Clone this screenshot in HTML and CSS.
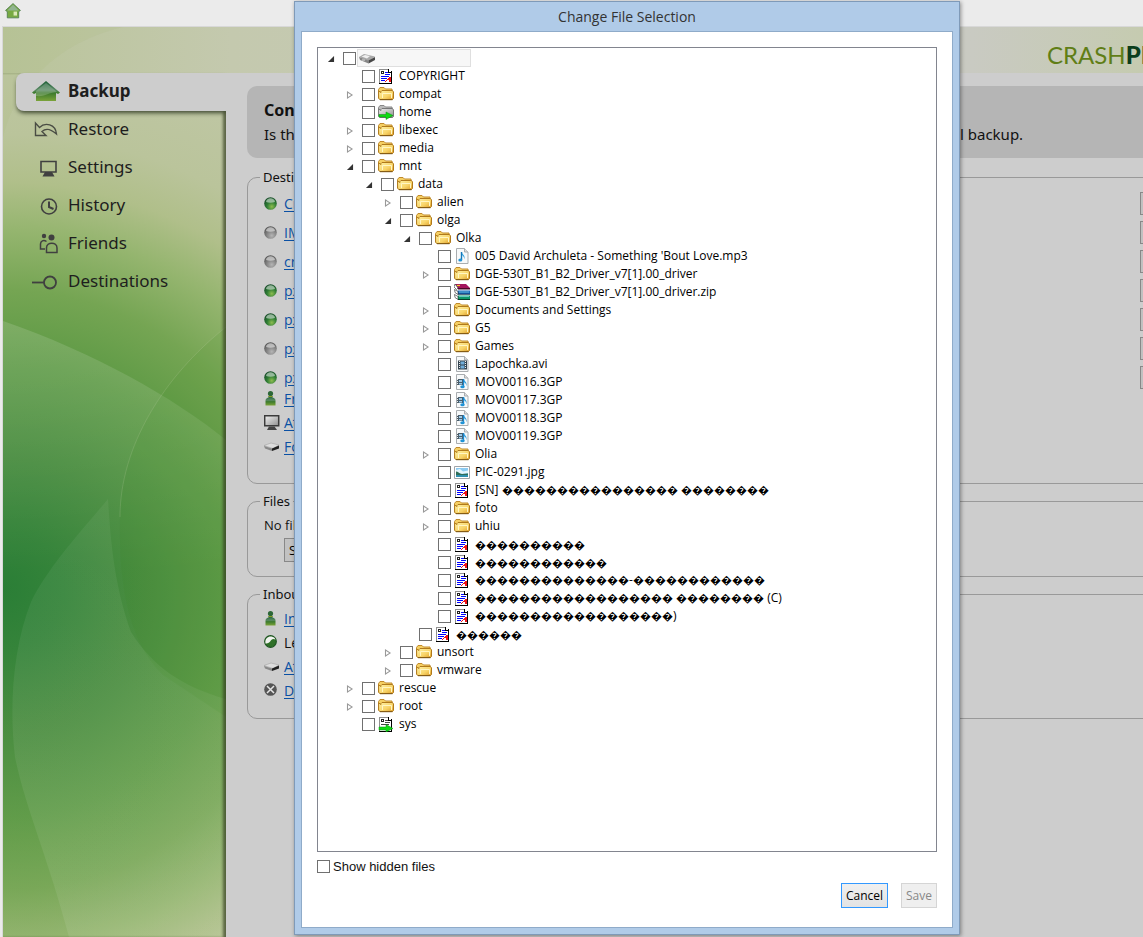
FILE: index.html
```html
<!DOCTYPE html>
<html lang="en">
<head>
<meta charset="utf-8">
<title>Change File Selection</title>
<link rel="stylesheet" href="styles.css">
</head>
<body>
<svg class="defs" aria-hidden="true">
  <defs>
    <linearGradient id="gold" x1="0" y1="0" x2="1" y2="1"><stop offset="0" stop-color="#fff3a8"/><stop offset=".6" stop-color="#f8d468"/><stop offset="1" stop-color="#dd9d2a"/></linearGradient>
    <linearGradient id="leaf" x1="0" y1="0" x2="0" y2="1"><stop offset="0" stop-color="#1d5f36"/><stop offset=".45" stop-color="#5a8a63"/><stop offset=".6" stop-color="#3c7a2c"/><stop offset="1" stop-color="#7ba33a"/></linearGradient>
    <radialGradient id="gball" cx=".6" cy=".75" r=".75"><stop offset="0" stop-color="#8dbd50"/><stop offset=".5" stop-color="#2f7d35"/><stop offset="1" stop-color="#164b28"/></radialGradient>
    <radialGradient id="sball" cx=".6" cy=".75" r=".75"><stop offset="0" stop-color="#b5b5b5"/><stop offset=".5" stop-color="#868686"/><stop offset="1" stop-color="#555"/></radialGradient>
    <linearGradient id="steel" x1="0" y1="0" x2="1" y2="1"><stop offset="0" stop-color="#f2f2f2"/><stop offset="1" stop-color="#909090"/></linearGradient>
  </defs>
  <symbol id="folder" viewBox="0 0 16 16">
    <path d="M.5 12V3.500L2 1.500h4L7.500 3h6.500v2" fill="#f5cf63" stroke="#c08a2c"/>
    <path d="M2 13.500h12.500l1-1V6L14.500 4.500H4l-1 1v1L.6 5v7.500z" fill="url(#gold)" stroke="#b07a1c"/>
    <path d="M4.500 12V7.500h9V12" fill="none" stroke="#fff6c4"/>
    <path d="M2 13.700h12.500" stroke="#7d5613"/>
  </symbol>
  <symbol id="doc" viewBox="0 0 16 16">
    <g shape-rendering="crispEdges">
      <path d="M1 1h10l3 3v11H1z" fill="#fff"/>
      <path d="M1.500 15V1.500H10" fill="none" stroke="#909090"/>
      <path d="M10.500 1v3.500H14M13.500 3v12.500H1" fill="none" stroke="#000"/>
      <path d="M3 3h3v3H3z" fill="#222"/><path d="M4 4h1v1H4z" fill="#fff"/>
      <path d="M7 4h3v1H7zM7 6h5v1H7zM3 8h8v1H3zM3 10h6v1H3zM3 12h4v1H3z" fill="#0000ff"/>
      <path d="M12 9h-1v1h-1v1H9v1H8v1H7v1h1v-1h1v-1h2v2h2V9z" fill="#f01018"/>
    </g>
  </symbol>
  <symbol id="linkdoc" viewBox="0 0 16 16">
    <g shape-rendering="crispEdges">
      <path d="M1 1h10l3 3v11H1z" fill="#fff"/>
      <path d="M1.500 15V1.500H10" fill="none" stroke="#909090"/>
      <path d="M10.500 1v3.500H14M13.500 3v12.500H1" fill="none" stroke="#000"/>
      <path d="M3 3h3v3H3z" fill="#222"/><path d="M4 4h1v1H4z" fill="#fff"/>
      <path d="M7 4h3v1H7zM7 6h5v1H7zM3 8h8v1H3z" fill="#444"/>
    </g>
    <path d="M1 11h7V8.500l7 4-7 3.500v-2H1z" fill="#0edb12" stroke="#0a8a10" stroke-width=".5"/>
  </symbol>
  <symbol id="linkfolder" viewBox="0 0 16 16">
    <path d="M.5 12V3.500L2 1.500h4L7.500 3h6.500v2" fill="#bbb" stroke="#888"/>
    <path d="M2 13.500h12.500l1-1V6L14.500 4.500H4l-1 1v1L.6 5v7.500z" fill="url(#steel)" stroke="#777"/>
    <path d="M1 10.500h7V8l7 3.500-7 4v-2.500H1z" fill="#0edb12" stroke="#0a8a10" stroke-width=".5"/>
  </symbol>
  <symbol id="music" viewBox="0 0 16 16">
    <path d="M2.500.5h8l3.500 3.500v11.500H2.500z" fill="#f7f9fa" stroke="#a9adb0"/>
    <path d="M10.500.5V4H14" fill="#ddd" stroke="#a9adb0"/>
    <path d="M7.500 4v8" stroke="#1477b8" stroke-width="1.400"/><path d="M8 4c0 3 4 3 2 7.500C10.500 8 8.500 8 8 7z" fill="#2b9fdf"/><ellipse cx="6.300" cy="12" rx="2" ry="1.500" fill="#1f93d6"/>
  </symbol>
  <symbol id="video" viewBox="0 0 16 16">
    <path d="M2.500.5h8l3.500 3.500v11.500H2.500z" fill="#f7f9fa" stroke="#a9adb0"/><path d="M10.500.5V4H14" fill="#ddd" stroke="#a9adb0"/>
    <path d="M4 4.500h9v9H4z" fill="#344450"/><path d="M6.500 5.500h4v3h-4zM6.500 9.500h4v3h-4z" fill="#71aeda"/><path d="M5.500 5v8M11.500 5v8" stroke="#eee" stroke-dasharray="1 1"/>
  </symbol>
  <symbol id="clip" viewBox="0 0 16 16">
    <path d="M2.500.5h8l3.500 3.500v11.500H2.500z" fill="#f7f9fa" stroke="#a9adb0"/><path d="M10.500.5V4H14" fill="#ddd" stroke="#a9adb0"/>
    <path d="M3 5h6v6H3z" fill="#4a5d6a"/><path d="M5 6h3v2H5zM5 9h3v1.500H5z" fill="#9cc9e8"/><path d="M3.500 5v6" stroke="#eee" stroke-dasharray="1 1"/>
    <path d="M9.500 5v8" stroke="#1c86cc" stroke-width="1.300"/><path d="M10 4.500c0 3 4 3.500 2 8C12.500 9 10.500 9 10 8z" fill="#2b9fdf"/><ellipse cx="8.500" cy="12.800" rx="2.200" ry="1.500" fill="#1f93d6"/>
  </symbol>
  <symbol id="photo" viewBox="0 0 16 16">
    <path d="M.5 2.500h15v12H.5z" fill="#fff" stroke="#a0a4a8"/><path d="M2 4h12v9H2z" fill="#8ccbf2"/><path d="M2 6l4-1 3 2.500 5-1V9l-6 1-6-1z" fill="#e4f5fc"/><path d="M2 7.500c2 0 3 2 6 2.500l6-.5v1.500H2z" fill="#2f6e58"/><path d="M2 11h12v2H2z" fill="#2f8fae"/>
  </symbol>
  <symbol id="rar" viewBox="0 0 16 16">
    <path d="M1 0h11l4 4H4z" fill="#a3145c"/><path d="M3.500 4H16v1.500H4z" fill="#4c0828"/><path d="M1 0l3 4-1.500 1.500L0 3z" fill="#fff" stroke="#222" stroke-width=".6"/><path d="M3 1.500h3" stroke="#f2c928" stroke-width="1.200"/>
    <path d="M3.500 6.500H16V10H4z" fill="#1867b8"/><path d="M4 10.200h12" stroke="#06264d"/><path d="M.5 5.500L4 7.500v3L1 8.500z" fill="#fff" stroke="#222" stroke-width=".6"/>
    <path d="M4 11.500h12V15H4z" fill="#0f9868"/><path d="M4 15.500h12" stroke="#063d2b"/><path d="M.5 10.500L4 12.500v3l-3-2z" fill="#fff" stroke="#222" stroke-width=".6"/><path d="M5 8h10M5 12.500h10" stroke="#8edbe6" stroke-width=".7"/>
  </symbol>
  <symbol id="drive" viewBox="0 0 16 16">
    <path d="M0 7l5-3 11 2.500-6 4.500z" fill="#a9a9a9"/><path d="M2.500 6.500l3.500-1.500 5 1-3 2.500z" fill="#efefef"/><path d="M0 7l9.500 3.500v3L1 10z" fill="#868686"/><path d="M9.500 10.500L16 7v3l-6.500 3.500z" fill="#474747"/><path d="M3 10h3" stroke="#ddd"/>
  </symbol>
  <symbol id="green" viewBox="0 0 16 16"><circle cx="6.500" cy="7.500" r="6.300" fill="url(#gball)"/><path d="M2 6C2.500 1 10.500 1 11 6 8.500 7 4.500 7 2 6z" fill="#cfe0d2" opacity=".65"/></symbol>
  <symbol id="gray" viewBox="0 0 16 16"><circle cx="6.500" cy="7.500" r="6.300" fill="url(#sball)"/><path d="M2 6C2.500 1 10.500 1 11 6 8.500 7 4.500 7 2 6z" fill="#e0e0e0" opacity=".65"/></symbol>
  <symbol id="pawn" viewBox="0 0 16 16"><circle cx="6.500" cy="3.500" r="2.600" fill="#2c6636"/><path d="M4.500 6h4v1.500c2 .5 3 1.500 3 3v5h-10v-5c0-1.500 1-2.500 3-3z" fill="url(#leaf)"/><path d="M4.500 6.500h4" stroke="#8a9e20"/></symbol>
  <symbol id="pc" viewBox="0 0 16 16"><path d="M.7 1.700h14v10H.7z" fill="url(#steel)" stroke="#3b3b3b" stroke-width="1.500"/><path d="M5 12.500h5.500l2.500 3.500H3z" fill="#444"/></symbol>
  <symbol id="disk" viewBox="0 0 16 16"><path d="M0 7.500L7 5l8 2-6 3.500z" fill="#dedede" stroke="#999" stroke-width=".5"/><path d="M0 8l8 2.500V13L1 10.500z" fill="#888"/><path d="M8 10.500L15 7.500v3L8 13z" fill="#222"/></symbol>
  <symbol id="swirl" viewBox="0 0 16 16"><circle cx="6.500" cy="7.500" r="5.800" fill="#2f7028" stroke="#1d5420" stroke-width="1.200"/><path d="M1.500 9.500C.5 4.500 4.500 2 7.500 2.500c2 .3 3.500 1.500 4 3-3-1.500-4 0-5 1.500S3.500 10 1.500 9.500z" fill="#f0f3ee"/></symbol>
  <symbol id="cross" viewBox="0 0 16 16"><circle cx="6.500" cy="7.500" r="6.300" fill="#555"/><path d="M3 4l7 7m0-7l-7 7" stroke="#e5e5e5" stroke-width="1.500"/></symbol>
  <symbol id="house" viewBox="0 0 28 22"><path d="M14 1L28 12.500l-2 1.500-2-1v8H4v-8l-2 1-2-1.500z" fill="url(#leaf)"/><path d="M14 3L25 12C17 12 14 17 4 16v-5z" fill="#fff" opacity=".2"/></symbol>
</svg>

<div class="app">
  <header class="toolbar">
    <svg width="16" height="16" viewBox="0 0 28 28"><path d="M14 1l13 12-3 2v11H4V15l-3-2z" fill="#78aa42" stroke="#507d4f" stroke-width="1.500"/><path d="M14 3l10 10H4z" fill="#91b491"/><path d="M15 15h6v7h-6z" fill="#dceab8"/></svg>
  </header>
  <div class="window">
    <svg class="scenery" viewBox="0 0 1140 910" preserveAspectRatio="xMinYMin slice" aria-hidden="true">
      <defs>
        <radialGradient id="field" gradientUnits="userSpaceOnUse" cx="0" cy="563" r="600">
          <stop offset="0" stop-color="#247a30"/><stop offset=".1" stop-color="#2f8034"/><stop offset=".22" stop-color="#43893a"/><stop offset=".38" stop-color="#5c9944"/><stop offset=".5" stop-color="#75a553"/><stop offset=".6" stop-color="#95b56f"/><stop offset=".68" stop-color="#b0bf8a"/><stop offset=".76" stop-color="#bac49b"/><stop offset=".92" stop-color="#c0c7a6"/><stop offset="1" stop-color="#c2c8aa"/>
        </radialGradient>
        <linearGradient id="sky" x1="0" x2="1"><stop offset="0" stop-color="#b9c49a"/><stop offset=".2" stop-color="#c4c9ae"/><stop offset=".85" stop-color="#c9cac2"/><stop offset="1" stop-color="#c5cbb0"/></linearGradient>
        <linearGradient id="fade" x1="0" y1="0" x2="0" y2="1"><stop offset="0" stop-color="#fff" stop-opacity=".14"/><stop offset=".4" stop-color="#fff" stop-opacity=".03"/><stop offset="1" stop-color="#fff" stop-opacity=".03"/></linearGradient>
        <linearGradient id="veil" x1="0" y1="0" x2="0" y2="1"><stop offset="0" stop-color="#fff" stop-opacity=".05"/><stop offset="1" stop-color="#fff" stop-opacity=".08"/></linearGradient>
      </defs>
      <rect width="1140" height="910" fill="url(#field)"/>
      <rect width="1140" height="48" fill="url(#sky)"/>
      <path d="M0 110C12 60 55 15 120 0H0z" fill="#a3b670" opacity=".12"/>
      <path d="M0 294C90 325 170 370 223 413V910H0z" fill="url(#fade)"/>
      <path d="M105 472C80 502 45 540 28 575 10 620 6 680 12 730 22 780 45 830 66 910H223V672C180 660 150 640 128 605 112 560 108 520 105 472z" fill="url(#veil)"/>
      <path d="M223 300C160 350 117 420 117 490 116 540 120 610 160 648L223 690z" fill="#3d8a20" opacity=".1"/>
      <path d="M223 300C160 350 117 420 117 490" fill="none" stroke="#c4d0ac" stroke-opacity=".2"/>
    </svg>
    <div class="banner"><p class="logo">CRASH<b>PLAN</b></p></div>
    <div class="columns">
      <nav class="menu">
        <a class="item current" href="#backup"><svg width="28" height="22"><use href="#house"/></svg>Backup</a>
        <a class="item" href="#restore"><svg width="28" height="22" viewBox="0 0 28 22" fill="none" stroke="#4a4d44" stroke-width="1.400"><path d="M3.500 5v12.500h10.500l-4-4c4-3.500 8-3 14.500 2.500C23.500 6 13 4 7.500 9.500z"/></svg>Restore</a>
        <a class="item" href="#settings"><svg width="28" height="22" viewBox="0 0 28 22"><path d="M9 5.500h15v10.500H9z" fill="none" stroke="#404040" stroke-width="1.600"/><path d="M13 16h7l2.500 4.500h-12z" fill="#404040"/></svg>Settings</a>
        <a class="item" href="#history"><svg width="28" height="22" viewBox="0 0 28 22" fill="none" stroke="#404040" stroke-width="1.600"><circle cx="17" cy="12.500" r="7.500"/><path d="M17 7.500V13l4.500 2" stroke-width="2"/></svg>History</a>
        <a class="item" href="#friends"><svg width="28" height="22" viewBox="0 0 28 22" fill="none" stroke="#404040" stroke-width="1.500"><circle cx="12" cy="4" r="2.200" fill="#404040" stroke="none"/><circle cx="19.500" cy="5.500" r="3" fill="#404040" stroke="none"/><path d="M13 17H8.500v-5c0-3 3-4.500 6-2.500M14.500 20.500V16c0-6.500 10.500-6.500 10.500 0v4.500z"/></svg>Friends</a>
        <a class="item" href="#destinations"><svg width="28" height="22" viewBox="0 0 28 22" fill="none" stroke="#404040" stroke-width="1.800"><circle cx="18" cy="12.500" r="6"/><path d="M-1 12.500h13"/></svg>Destinations</a>
      </nav>
      <main class="page">
        <section class="notice"><h1>Con</h1><p><span>Is this</span><span>l backup.</span></p></section>
        <fieldset class="group">
          <legend>Destinations</legend>
          <ul class="list">
            <li class="tall"><svg width="16" height="16"><use href="#green"/></svg><a href="#d1">Cr</a><button type="button" aria-label="Options"></button></li>
            <li class="tall"><svg width="16" height="16"><use href="#gray"/></svg><a href="#d2">IM</a><button type="button" aria-label="Options"></button></li>
            <li class="tall"><svg width="16" height="16"><use href="#gray"/></svg><a href="#d3">cr</a><button type="button" aria-label="Options"></button></li>
            <li class="tall"><svg width="16" height="16"><use href="#green"/></svg><a href="#d4">px</a><button type="button" aria-label="Options"></button></li>
            <li class="tall"><svg width="16" height="16"><use href="#green"/></svg><a href="#d5">px</a><button type="button" aria-label="Options"></button></li>
            <li class="tall"><svg width="16" height="16"><use href="#gray"/></svg><a href="#d6">px</a><button type="button" aria-label="Options"></button></li>
            <li class="tall"><svg width="16" height="16"><use href="#green"/></svg><a href="#d7">px</a><button type="button" aria-label="Options"></button></li>
          </ul>
          <ul class="list devices">
            <li><svg width="16" height="16"><use href="#pawn"/></svg><a href="#d8">Fr</a></li>
            <li><svg width="16" height="16"><use href="#pc"/></svg><a href="#d9">At</a></li>
            <li><svg width="16" height="16"><use href="#disk"/></svg><a href="#d10">Fo</a></li>
          </ul>
        </fieldset>
        <fieldset class="group">
          <legend>Files</legend>
          <p class="empty">No files</p>
          <button class="select" type="button">Select</button>
        </fieldset>
        <fieldset class="group inbound">
          <legend>Inbound</legend>
          <ul class="list">
            <li><svg width="16" height="16"><use href="#pawn"/></svg><a href="#i1">In</a></li>
            <li><svg width="16" height="16"><use href="#swirl"/></svg><span>Le</span></li>
            <li><svg width="16" height="16"><use href="#disk"/></svg><a href="#i2">At</a></li>
            <li><svg width="16" height="16"><use href="#cross"/></svg><a href="#i3">De</a></li>
          </ul>
        </fieldset>
      </main>
    </div>
  </div>
</div>

<div class="dialog" role="dialog" aria-labelledby="title">
  <h2 id="title">Change File Selection</h2>
  <div class="body">
    <ul class="tree">
      <li><div class="row"><button class="open" aria-label="Collapse"></button><input type="checkbox" id="f0"><label for="f0" class="picked" aria-label="Root"><svg><use href="#drive"/></svg></label></div>
        <ul>
          <li><div class="row leaf"><input type="checkbox" id="f1"><label for="f1"><svg><use href="#doc"/></svg>COPYRIGHT</label></div></li>
          <li><div class="row"><button class="shut" aria-label="Expand"></button><input type="checkbox" id="f2"><label for="f2"><svg><use href="#folder"/></svg>compat</label></div></li>
          <li><div class="row leaf"><input type="checkbox" id="f3"><label for="f3"><svg><use href="#linkfolder"/></svg>home</label></div></li>
          <li><div class="row"><button class="shut" aria-label="Expand"></button><input type="checkbox" id="f4"><label for="f4"><svg><use href="#folder"/></svg>libexec</label></div></li>
          <li><div class="row"><button class="shut" aria-label="Expand"></button><input type="checkbox" id="f5"><label for="f5"><svg><use href="#folder"/></svg>media</label></div></li>
          <li><div class="row"><button class="open" aria-label="Collapse"></button><input type="checkbox" id="f6"><label for="f6"><svg><use href="#folder"/></svg>mnt</label></div>
            <ul>
              <li><div class="row"><button class="open" aria-label="Collapse"></button><input type="checkbox" id="f7"><label for="f7"><svg><use href="#folder"/></svg>data</label></div>
                <ul>
                  <li><div class="row"><button class="shut" aria-label="Expand"></button><input type="checkbox" id="f8"><label for="f8"><svg><use href="#folder"/></svg>alien</label></div></li>
                  <li><div class="row"><button class="open" aria-label="Collapse"></button><input type="checkbox" id="f9"><label for="f9"><svg><use href="#folder"/></svg>olga</label></div>
                    <ul>
                      <li><div class="row"><button class="open" aria-label="Collapse"></button><input type="checkbox" id="f10"><label for="f10"><svg><use href="#folder"/></svg>Olka</label></div>
                        <ul>
                          <li><div class="row leaf"><input type="checkbox" id="f11"><label for="f11"><svg><use href="#music"/></svg>005 David Archuleta - Something 'Bout Love.mp3</label></div></li>
                          <li><div class="row"><button class="shut" aria-label="Expand"></button><input type="checkbox" id="f12"><label for="f12"><svg><use href="#folder"/></svg>DGE-530T_B1_B2_Driver_v7[1].00_driver</label></div></li>
                          <li><div class="row leaf"><input type="checkbox" id="f13"><label for="f13"><svg><use href="#rar"/></svg>DGE-530T_B1_B2_Driver_v7[1].00_driver.zip</label></div></li>
                          <li><div class="row"><button class="shut" aria-label="Expand"></button><input type="checkbox" id="f14"><label for="f14"><svg><use href="#folder"/></svg>Documents and Settings</label></div></li>
                          <li><div class="row"><button class="shut" aria-label="Expand"></button><input type="checkbox" id="f15"><label for="f15"><svg><use href="#folder"/></svg>G5</label></div></li>
                          <li><div class="row"><button class="shut" aria-label="Expand"></button><input type="checkbox" id="f16"><label for="f16"><svg><use href="#folder"/></svg>Games</label></div></li>
                          <li><div class="row leaf"><input type="checkbox" id="f17"><label for="f17"><svg><use href="#video"/></svg>Lapochka.avi</label></div></li>
                          <li><div class="row leaf"><input type="checkbox" id="f18"><label for="f18"><svg><use href="#clip"/></svg>MOV00116.3GP</label></div></li>
                          <li><div class="row leaf"><input type="checkbox" id="f19"><label for="f19"><svg><use href="#clip"/></svg>MOV00117.3GP</label></div></li>
                          <li><div class="row leaf"><input type="checkbox" id="f20"><label for="f20"><svg><use href="#clip"/></svg>MOV00118.3GP</label></div></li>
                          <li><div class="row leaf"><input type="checkbox" id="f21"><label for="f21"><svg><use href="#clip"/></svg>MOV00119.3GP</label></div></li>
                          <li><div class="row"><button class="shut" aria-label="Expand"></button><input type="checkbox" id="f22"><label for="f22"><svg><use href="#folder"/></svg>Olia</label></div></li>
                          <li><div class="row leaf"><input type="checkbox" id="f23"><label for="f23"><svg><use href="#photo"/></svg>PIC-0291.jpg</label></div></li>
                          <li><div class="row leaf"><input type="checkbox" id="f24"><label for="f24"><svg><use href="#doc"/></svg><span>[SN] <span class="raw">���������������� ��������</span></span></label></div></li>
                          <li><div class="row"><button class="shut" aria-label="Expand"></button><input type="checkbox" id="f25"><label for="f25"><svg><use href="#folder"/></svg>foto</label></div></li>
                          <li><div class="row"><button class="shut" aria-label="Expand"></button><input type="checkbox" id="f26"><label for="f26"><svg><use href="#folder"/></svg>uhiu</label></div></li>
                          <li><div class="row leaf"><input type="checkbox" id="f27"><label for="f27"><svg><use href="#doc"/></svg><span class="raw">����������</span></label></div></li>
                          <li><div class="row leaf"><input type="checkbox" id="f28"><label for="f28"><svg><use href="#doc"/></svg><span class="raw">������������</span></label></div></li>
                          <li><div class="row leaf"><input type="checkbox" id="f29"><label for="f29"><svg><use href="#doc"/></svg><span><span class="raw">��������������</span>-<span class="raw">������������</span></span></label></div></li>
                          <li><div class="row leaf"><input type="checkbox" id="f30"><label for="f30"><svg><use href="#doc"/></svg><span><span class="raw">������������������ ��������</span> (C)</span></label></div></li>
                          <li><div class="row leaf"><input type="checkbox" id="f31"><label for="f31"><svg><use href="#doc"/></svg><span><span class="raw">������������������</span>)</span></label></div></li>
                        </ul>
                      </li>
                      <li><div class="row leaf"><input type="checkbox" id="f32"><label for="f32"><svg><use href="#doc"/></svg><span class="raw">������</span></label></div></li>
                    </ul>
                  </li>
                  <li><div class="row"><button class="shut" aria-label="Expand"></button><input type="checkbox" id="f33"><label for="f33"><svg><use href="#folder"/></svg>unsort</label></div></li>
                  <li><div class="row"><button class="shut" aria-label="Expand"></button><input type="checkbox" id="f34"><label for="f34"><svg><use href="#folder"/></svg>vmware</label></div></li>
                </ul>
              </li>
            </ul>
          </li>
          <li><div class="row"><button class="shut" aria-label="Expand"></button><input type="checkbox" id="f35"><label for="f35"><svg><use href="#folder"/></svg>rescue</label></div></li>
          <li><div class="row"><button class="shut" aria-label="Expand"></button><input type="checkbox" id="f36"><label for="f36"><svg><use href="#folder"/></svg>root</label></div></li>
          <li><div class="row leaf"><input type="checkbox" id="f37"><label for="f37"><svg><use href="#linkdoc"/></svg>sys</label></div></li>
        </ul>
      </li>
    </ul>
    <div class="hidden-files"><input type="checkbox" id="hid"><label for="hid">Show hidden files</label></div>
    <div class="actions"><button class="cancel" type="button">Cancel</button><button type="button" disabled>Save</button></div>
  </div>
</div>
</body>
</html>
```
FILE: styles.css
```css
* { box-sizing: border-box; }
html, body { height: 100%; }
body {
  margin: 0;
  overflow: hidden;
  position: relative;
  background: #ebebeb;
  font: 12px "Open Sans", "Noto Sans", sans-serif;
  color: #111;
}
ul, h1, h2, p { margin: 0; padding: 0; }
ul { list-style: none; }
svg { flex: none; display: block; }
.defs { position: absolute; width: 0; height: 0; }

.app { height: 100%; display: flex; flex-direction: column; }
.toolbar { height: 26px; padding: 3px 5px; }
.window {
  flex: 1;
  position: relative;
  display: flex;
  flex-direction: column;
  margin-left: 2px;
  border-top: 1px solid #d8d8d8;
  border-left: 1px solid #d8d8d8;
  overflow: hidden;
  isolation: isolate;
}
.scenery { position: absolute; inset: 0; width: 100%; height: 100%; z-index: -1; }
.banner { height: 46px; display: flex; justify-content: flex-end; }
.logo {
  width: 96px;
  overflow: hidden;
  white-space: nowrap;
  font: 24px/56px Lato, sans-serif;
  color: #607e16;
}
.logo b { font-weight: 900; color: #0b3d1b; }
.columns { flex: 1; display: flex; min-height: 0; }

.menu { width: 223px; padding-left: 13px; flex: none; box-shadow: inset -4px 0 3px -1px rgba(50, 60, 30, .7); }
.item {
  display: flex;
  align-items: center;
  gap: 8px;
  height: 38px;
  padding: 0 0 3px 16px;
  font: 17px "Noto Sans", sans-serif;
  color: #1e1e1e;
  text-decoration: none;
}
.current {
  font-weight: 700;
  background: #cdcdcd;
  border-radius: 8px 0 0 8px;
  box-shadow: 0 3px 4px -1px rgba(30, 40, 20, .8);
}

.page { flex: 1; min-width: 0; padding: 13px 0 0 21px; background: #cdcdcd; position: relative; overflow: hidden; }
.notice, .group { width: calc(100% + 72px); }
.notice { height: 72px; padding: 12px 17px; border-radius: 10px; background: #b5b5b5; margin-bottom: 10px; font-family: "Noto Sans", sans-serif; }
.notice h1 { font-size: 16px; line-height: 24px; }
.notice p { display: grid; grid-template-columns: 696px 1fr; font-size: 15px; line-height: 24px; }
.group { height: 316px; margin: 0 0 8px; padding: 3px 0 0 16px; border: 1px solid #999; border-radius: 10px; min-width: 0; }
.group + .group { height: 85px; }
.group + .inbound { height: 134px; }
legend { margin-left: -4px; padding: 0 3px; font: 13px/18px "Noto Sans", sans-serif; }
.list li { display: flex; align-items: center; gap: 4px; height: 24px; font-size: 14px; }
.list .tall { height: 29px; }
.devices { margin-top: -6px; }
.list a { color: #0a50a4; text-underline-offset: 2px; }
.list button { margin-left: auto; width: 74px; height: 23px; border: 1px solid #888; background: #c0c0c0; }
.empty { font-size: 13px; line-height: 25px; }
.select { margin-left: 20px; width: 80px; height: 24px; text-align: left; font: 13px "Open Sans", sans-serif; border: 1px solid #888; background: #c2c2c2; padding: 0 4px; }

.dialog {
  position: absolute;
  top: 1px;
  bottom: 2px;
  left: 294px;
  width: 666px;
  display: flex;
  flex-direction: column;
  padding: 0 6px 6px;
  border: 1px solid #7f9ab8;
  background: #b0cbe8;
  box-shadow: 1px 1px 4px rgba(0, 0, 0, .4);
}
.dialog h2 { height: 29px; font: 14px/29px "Open Sans", sans-serif; text-align: center; color: #333; }
.body { flex: 1; min-height: 0; display: flex; flex-direction: column; padding: 15px; border: 1px solid #8fabc9; background: #fff; }
.tree { flex: 1; min-height: 0; overflow: hidden; border: 1px solid #82858f; padding: 1px 0 0 9px; color: #000; }
.tree ul { padding-left: 19px; }
.row { display: flex; align-items: center; height: 18px; }
.row.leaf { padding-left: 16px; }
.row button { width: 8px; height: 8px; margin: 2px 8px 0 0; padding: 0; border: 0; }
.open { background: #333; clip-path: polygon(88% 12%, 88% 88%, 12% 88%); }
.shut { background: #999; clip-path: polygon(evenodd, 12% 0, 88% 50%, 12% 100%, 12% 0, 25% 25%, 65% 50%, 25% 75%, 25% 25%); }
input[type="checkbox"] { appearance: none; width: 13px; height: 13px; margin: 0; border: 1px solid #707070; background: #fff; flex: none; }
.row label { display: flex; align-items: center; gap: 5px; height: 18px; padding-left: 3px; line-height: 16px; white-space: pre; }
.row svg { width: 16px; height: 16px; }
.row .picked { width: 114px; margin-left: 1px; padding-left: 1px; border: 1px solid #dfdfdf; background: #f7f7f7; }
.raw { font: 11px "Liberation Sans", sans-serif; }
.hidden-files { display: flex; align-items: center; gap: 3px; height: 28px; font: 13px "Liberation Sans", sans-serif; }
.actions { display: flex; justify-content: flex-end; gap: 13px; height: 32px; padding-top: 3px; }
.actions button { height: 25px; padding: 0 4px; font: 12px "Open Sans", sans-serif; border: 1px solid #d5d5d5; background: #efefef; color: #888; }
.actions .cancel { border: 1px solid #3399ff; background: linear-gradient(#f0f0f0, #e3e3e3); color: #000; }
```
